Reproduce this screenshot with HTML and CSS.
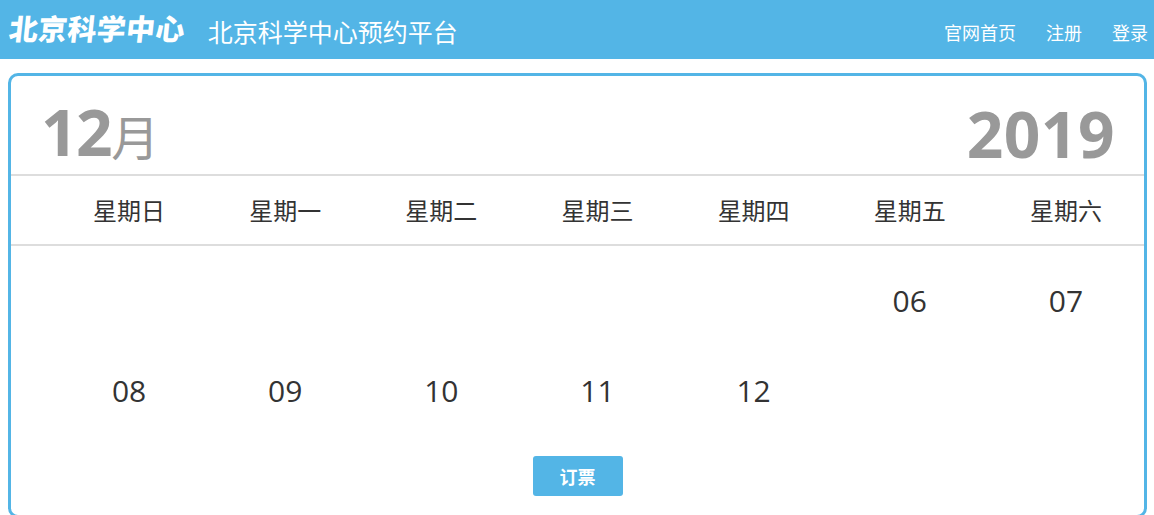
FILE: index.html
```html
<!DOCTYPE html>
<html lang="zh-CN">
<head>
    <meta charset="UTF-8">
    <title>北京科学中心预约平台</title>
    <link rel="stylesheet" href="styles.css">
</head>
<body>

    <div class="top-bar">
        <div class="logo">北京科学中心</div>
        <div class="site-title">北京科学中心预约平台</div>
        <div class="top-links">
            <a href="#">官网首页</a>
            <a href="#">注册</a>
            <a href="#">登录</a>
        </div>
    </div>

    <div class="calendar">
        <div class="calendar-head">
            <div class="month"><b>12</b>月</div>
            <div class="year">2019</div>
        </div>

        <ul class="week-row">
            <li>星期日</li>
            <li>星期一</li>
            <li>星期二</li>
            <li>星期三</li>
            <li>星期四</li>
            <li>星期五</li>
            <li>星期六</li>
        </ul>

        <ul class="day-row">
            <li></li>
            <li></li>
            <li></li>
            <li></li>
            <li></li>
            <li>06</li>
            <li>07</li>
            <li>08</li>
            <li>09</li>
            <li>10</li>
            <li>11</li>
            <li>12</li>
        </ul>

        <div class="book-line">
            <button class="book-btn">订票</button>
        </div>
    </div>

</body>
</html>
```

FILE: styles.css
```css
html, body {
    height: 515px;
    overflow: hidden;
}

body {
    margin: 0;
    padding: 0;
    background-color: #ffffff;
    color: #333333;
    font-family: "Open Sans", "Noto Sans CJK SC", sans-serif;
}

ul {
    list-style: none;
    margin: 0;
}

.top-bar {
    display: flex;
    align-items: center;
    height: 59px;
    background-color: #53b5e6;
    color: #ffffff;
}

.logo {
    margin-left: 9px;
    padding-bottom: 5px;
    font-family: "Noto Sans CJK SC", sans-serif;
    font-size: 29px;
    font-weight: 900;
    line-height: 40px;
    letter-spacing: 0.3px;
    white-space: nowrap;
    transform: skewX(-6deg);
}

.site-title {
    margin-left: 23px;
    padding-top: 3px;
    font-family: "Noto Sans CJK SC", sans-serif;
    font-size: 25px;
    line-height: 36px;
}

.top-links {
    display: flex;
    gap: 30px;
    margin-left: auto;
    margin-right: 6px;
    padding-top: 4px;
    font-family: "Noto Sans CJK SC", sans-serif;
    font-size: 18px;
}

.top-links a {
    color: #ffffff;
    text-decoration: none;
}

.calendar {
    box-sizing: border-box;
    height: 445px;
    margin: 14px 7px 0 8px;
    border: 3px solid #53b5e6;
    border-radius: 10px;
}

.calendar-head {
    display: flex;
    justify-content: space-between;
    box-sizing: border-box;
    height: 98px;
    padding: 0 29px 0 30px;
    color: #999999;
}

.month {
    padding-top: 21px;
    font-size: 48px;
    line-height: 70px;
    font-family: "Noto Sans CJK SC", sans-serif;
}

.month b {
    font-family: "Open Sans", sans-serif;
    font-size: 64px;
    font-weight: 700;
    letter-spacing: -1.5px;
}

.year {
    padding-top: 23px;
    font-size: 64px;
    font-weight: 700;
    line-height: 70px;
    letter-spacing: 0.5px;
}

.week-row, .day-row {
    display: grid;
    grid-template-columns: repeat(7, 1fr);
    padding: 0 0 0 40px;
}

.week-row {
    height: 68px;
    border-top: 2px solid #dddddd;
    border-bottom: 2px solid #dddddd;
}

.week-row li {
    font-family: "Noto Sans CJK SC", sans-serif;
    font-size: 24px;
    line-height: 68px;
    text-align: center;
}

.day-row li {
    height: 90px;
    font-size: 30px;
    line-height: 110px;
    text-align: center;
}

.book-line {
    display: flex;
    justify-content: center;
    margin-top: 30px;
}

.book-btn {
    width: 90px;
    height: 40px;
    padding: 0;
    border: none;
    border-radius: 3px;
    background-color: #53b5e6;
    color: #ffffff;
    font-family: "Noto Sans CJK SC", sans-serif;
    font-size: 18px;
    font-weight: 700;
}
```
